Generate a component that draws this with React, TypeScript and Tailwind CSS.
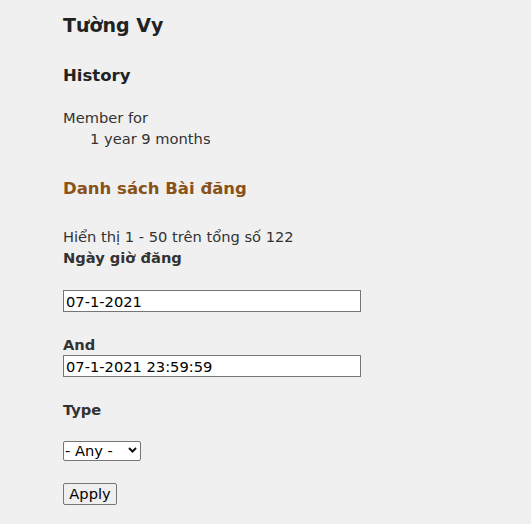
import { useState } from 'react';

export default function App() {
  const [from, setFrom] = useState('07-1-2021');
  const [to, setTo] = useState('07-1-2021 23:59:59');

  return (
    <div className="min-h-[524px] bg-[#f0f0f0] text-[#333] font-['DejaVu_Sans',Verdana,sans-serif] text-[14.67px] leading-[21px]">
      <div className="pl-[63px] pt-[12px]">
        <h1 className="text-[19px] leading-[26px] font-bold text-[#222]">Tường Vy</h1>

        <h2 className="mt-[27px] text-[16.5px] leading-[22px] font-bold text-[#222]">History</h2>
        <div className="mt-[20px]">
          <div>Member for</div>
          <div className="pl-[27px]">1 year 9 months</div>
        </div>

        <h2 className="mt-[29px] text-[16.5px] leading-[22px] font-bold text-[#8a5218]">Danh sách Bài đăng</h2>

        <div className="mt-[26px]">Hiển thị 1 - 50 trên tổng số 122</div>

        <form onSubmit={(e) => e.preventDefault()}>
          <label className="block font-bold">Ngày giờ đăng</label>
          <input
            value={from}
            onChange={(e) => setFrom(e.target.value)}
            className="mt-[22px] block w-[298px] h-[22px] bg-white border border-[#767676] px-[2px] text-[14.67px] text-black outline-none"
          />

          <label className="mt-[22px] block font-bold">And</label>
          <input
            value={to}
            onChange={(e) => setTo(e.target.value)}
            className="block w-[298px] h-[22px] bg-white border border-[#767676] px-[2px] text-[14.67px] text-black outline-none"
          />

          <label className="mt-[22px] block font-bold">Type</label>
          <div className="mt-[20px] relative w-[78px] h-[20px]">
            <select className="appearance-none w-full h-full bg-white border border-[#767676] rounded-[2px] pl-[1px] text-[14.67px] leading-[18px] text-black outline-none">
              <option>- Any -</option>
            </select>
            <svg className="pointer-events-none absolute right-[4px] top-[7px]" width="9" height="6" viewBox="0 0 9 6">
              <path d="M1 1 L4.5 4.5 L8 1" fill="none" stroke="#111" strokeWidth="2" />
            </svg>
          </div>

          <button
            type="submit"
            className="mt-[23px] block w-[54px] h-[22px] bg-[#efefef] border border-[#767676] rounded-[2px] text-[14.67px] leading-[18px] text-black"
          >
            Apply
          </button>
        </form>
      </div>
    </div>
  );
}
